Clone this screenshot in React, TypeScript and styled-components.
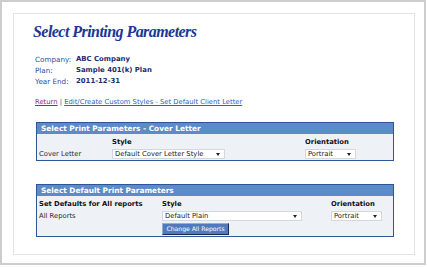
import React from 'react';
import styled, { createGlobalStyle } from 'styled-components';

const Global = createGlobalStyle`
  html, body { margin: 0; padding: 0; background: #fff; }
  body { font-family: "DejaVu Sans", Verdana, sans-serif; }
`;

const Frame = styled.div`
  box-sizing: border-box;
  width: 426px;
  height: 265px;
  border: 2px solid #cdcdcd;
  padding: 11px 9px 8px 11px;
  background: #fff;
`;

const Sheet = styled.div`
  box-sizing: border-box;
  height: 242px;
  border: 1px solid #e3e3e3;
  padding: 8px 0 0 19px;
`;

const Title = styled.h1`
  margin: 0;
  font-family: "Liberation Serif", "Times New Roman", serif;
  font-style: italic;
  font-weight: bold;
  font-size: 16px;
  letter-spacing: -0.55px;
  line-height: 20px;
  color: #1a3796;
`;

const Info = styled.div`
  display: grid;
  grid-template-columns: 41px auto;
  margin: 12px 0 0 2px;
  line-height: 11px;
`;

const Label = styled.div`
  font-size: 7.2px;
  color: #2b4da0;
`;

const Value = styled.div`
  font-size: 6.9px;
  color: #1d2b70;
  font-weight: bold;
`;

const Links = styled.div`
  margin: 10px 0 0 2px;
  font-size: 6.8px;
  line-height: 11px;
  color: #2b4da0;
`;

const Link = styled.a<{ $visited?: boolean }>`
  color: ${(p) => (p.$visited ? '#8a2a8a' : '#2a62c8')};
  text-decoration: underline;
`;

const Panel = styled.div<{ $mt: number }>`
  margin: ${(p) => p.$mt}px 0 0 3px;
  width: 358px;
  box-sizing: border-box;
  border: 1px solid #2e5594;
  background: #eef1f6;
  color: #222;
`;

const PanelHeader = styled.div`
  height: 11px;
  line-height: 11px;
  background: #5b8bc8;
  color: #fff;
  font-weight: bold;
  font-size: 7.4px;
  padding-left: 4px;
  white-space: nowrap;
`;

const PanelBody = styled.div<{ $cols: string }>`
  display: grid;
  grid-template-columns: ${(p) => p.$cols};
  row-gap: 2px;
  padding: 3px 0 1px 0;
`;

const Cell = styled.div<{ $bold?: boolean; $h?: number }>`
  display: flex;
  align-items: center;
  min-height: ${(p) => p.$h ?? 10}px;
  line-height: 10px;
  font-size: 6.8px;
  font-weight: ${(p) => (p.$bold ? 'bold' : 'normal')};
  color: ${(p) => (p.$bold ? '#111' : '#2a2a2a')};
  white-space: nowrap;
`;

const LabelCell = styled(Cell)`
  padding-left: 2px;
`;

const Select = styled.div<{ $w: number }>`
  box-sizing: border-box;
  width: ${(p) => p.$w}px;
  height: 10px;
  background: #fff;
  border: 1px solid #d4d8de;
  display: flex;
  align-items: center;
  justify-content: space-between;
  padding: 0 4px 0 2px;
  font-size: 6.8px;
  color: #222;
`;

const Arrow = () => (
  <svg width="4" height="3" viewBox="0 0 4 3">
    <path d="M0 0 H4 L2 3 Z" fill="#222" />
  </svg>
);

const Button = styled.button`
  box-sizing: border-box;
  width: 67px;
  height: 12px;
  padding: 0;
  margin: 0;
  background: #4f7bbd;
  border: 1px solid #1c2c52;
  border-top-color: #8fb0dc;
  border-left-color: #8fb0dc;
  color: #fff;
  font-family: "DejaVu Sans", Verdana, sans-serif;
  font-size: 6.1px;
  line-height: 10px;
  white-space: nowrap;
`;

export default function App() {
  return (
    <>
      <Global />
      <Frame>
        <Sheet>
          <Title>Select Printing Parameters</Title>
          <Info>
            <Label>Company:</Label>
            <Value>ABC Company</Value>
            <Label>Plan:</Label>
            <Value>Sample 401(k) Plan</Value>
            <Label>Year End:</Label>
            <Value>2011-12-31</Value>
          </Info>
          <Links>
            <Link $visited href="#">Return</Link> |{' '}
            <Link href="#">Edit/Create Custom Styles - Set Default Client Letter</Link>
          </Links>
          <Panel $mt={14}>
            <PanelHeader>Select Print Parameters - Cover Letter</PanelHeader>
            <PanelBody $cols="75px 193px 1fr">
              <LabelCell />
              <Cell $bold>Style</Cell>
              <Cell $bold>Orientation</Cell>
              <LabelCell>Cover Letter</LabelCell>
              <Cell>
                <Select $w={113}>Default Cover Letter Style<Arrow /></Select>
              </Cell>
              <Cell>
                <Select $w={51}>Portrait<Arrow /></Select>
              </Cell>
            </PanelBody>
          </Panel>
          <Panel $mt={23}>
            <PanelHeader>Select Default Print Parameters</PanelHeader>
            <PanelBody $cols="125px 169px 1fr">
              <LabelCell $bold>Set Defaults for All reports</LabelCell>
              <Cell $bold>Style</Cell>
              <Cell $bold>Orientation</Cell>
              <LabelCell>All Reports</LabelCell>
              <Cell>
                <Select $w={140}>Default Plain<Arrow /></Select>
              </Cell>
              <Cell>
                <Select $w={51}>Portrait<Arrow /></Select>
              </Cell>
              <LabelCell />
              <Cell $h={12}>
                <Button>Change All Reports</Button>
              </Cell>
              <Cell />
            </PanelBody>
          </Panel>
        </Sheet>
      </Frame>
    </>
  );
}
